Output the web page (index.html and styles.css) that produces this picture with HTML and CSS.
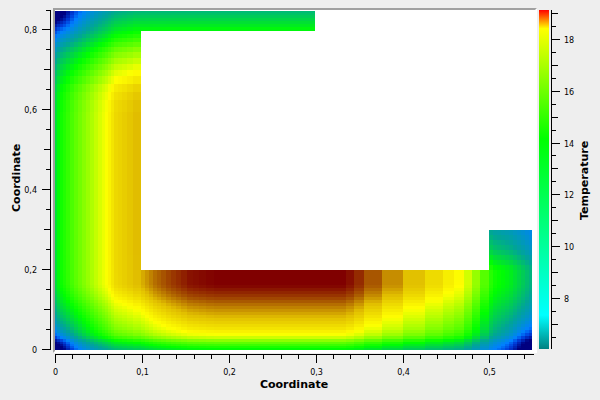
FILE: index.html
```html
<!DOCTYPE html>
<html lang="en">
<head>
  <meta charset="UTF-8">
  <title>Temperature</title>
  <link rel="stylesheet" href="styles.css">
</head>
<body>
  <div class="chart">
    <div class="y-title">Coordinate</div>
    <svg class="y-axis" id="yAxis" width="28" height="346"></svg>
    <div class="plot">
      <canvas id="heat" width="477" height="339"></canvas>
    </div>
    <div class="colorbar"></div>
    <svg class="color-axis" id="colorAxis" width="30" height="346"></svg>
    <div class="color-title">Temperature</div>
    <div class="bottom">
      <svg class="x-axis" id="xAxis" width="484" height="25"></svg>
      <div class="x-title">Coordinate</div>
    </div>
  </div>
  <script src="plot.js"></script>
</body>
</html>
```

FILE: styles.css
```css
body {
  margin: 0;
  width: 600px;
  height: 400px;
  overflow: hidden;
  background-color: #eeeeee;
  font-family: "DejaVu Sans", sans-serif;
  color: #000;
}

.chart {
  display: grid;
  grid-template-columns: 25px 28px 484px 12px 30px 21px;
  grid-template-rows: 345px 47px;
  padding-top: 8px;
}

.y-title,
.color-title {
  writing-mode: vertical-rl;
  transform: rotate(180deg);
  text-align: center;
  font-size: 11px;
  font-weight: bold;
  line-height: 21px;
  letter-spacing: 0;
}

.y-title {
  justify-self: end;
  padding-top: 5px;
  padding-bottom: 5px;
  margin-top: -5px;
  margin-right: -2px;
}

.color-title {
  justify-self: start;
  padding-bottom: 3px;
  margin-top: -3px;
  margin-left: -5px;
}

.plot {
  box-sizing: border-box;
  height: 345px;
  padding-top: 1px;
  background-color: #fff;
  border: 2px solid;
  border-color: #a0a0a0 #fff #fff #a0a0a0;
}

.plot canvas {
  display: block;
}

.colorbar {
  width: 10px;
  height: 339px;
  margin: 2px 0 0 2px;
  background: linear-gradient(to bottom, #ff0000 0%, #ffff00 5.5%, #00ff00 38%, #00ffff 90%, #008080 100%);
}

.bottom {
  grid-column: 3;
  grid-row: 2;
}

.x-axis {
  display: block;
}

.x-title {
  font-size: 11px;
  font-weight: bold;
  line-height: 14px;
  text-align: center;
  margin-top: 0;
  padding-right: 2px;
}

svg {
  overflow: visible;
  shape-rendering: crispEdges;
}

svg text {
  font-size: 8px;
  fill: #000;
  shape-rendering: auto;
}
```

FILE: plot.js
```js
const SVG_NS = "http://www.w3.org/2000/svg";

// Mesh lines of the solution, in page pixels
const meshX = [55,57,60,63,66,70,74,78,82,86,90,94,98,102,105,108,111,114,118,122,127,133,141,145,149,153,157,161,166,171,176,181,187,193,199,206,214,224,236,250,264,278,292,304,315,327,338,346,354,364,382,403,425,443,454,464,472,480,489,493,497,501,505,509,513,517,521,525,529,532];
const meshY = [11,13,15,18,21,24,27,31,34,38,42,47,52,58,64,70,76,84,92,100,112,130,150,170,190,210,230,235,240,245,250,255,260,265,270,273,276,279,282,285,288,291,294,297,300,303,306,309,312,315,318,321,324,327,330,333,336,339,342,344,346,348,350];

const colormap = [
  [0, 0, 0, 128], [0.08, 0, 64, 220], [0.13, 0, 128, 255], [0.25, 0, 165, 150],
  [0.4, 0, 255, 0], [0.68, 255, 255, 0], [0.8, 225, 190, 0], [0.9, 170, 90, 0], [1, 128, 0, 0]
];

// Temperature along the inner wall, through the band and under the top edge
const wallProfile = [[55,.32],[57,.38],[60,.41],[75,.5],[90,.58],[107,.68],[115,.75],[141,.81],[155,.88],[170,.93],[190,.98],[215,1],[345,1],[380,.88],[420,.78],[462,.68],[490,.45],[495,.42],[510,.38],[525,.31],[532,.27]];
const bottomProfile = [[270,1],[285,1],[296,.94],[306,.87],[316,.81],[330,.72],[336,.66],[342,.52],[347,.43],[350,.38]];
const topProfile = [[11,.35],[31,.5],[51,.7],[71,.85],[91,.97],[111,1]];
const stubProfile = [[230,.55],[250,.72],[270,1]];
const corners = [[55,11],[55,350],[532,350]];

function lookup(table, t) {
  if (t <= table[0][0]) return table[0][1];
  for (let i = 1; i < table.length; i++) {
    if (t <= table[i][0]) {
      const a = table[i - 1], b = table[i];
      return a[1] + (b[1] - a[1]) * (t - a[0]) / (b[0] - a[0]);
    }
  }
  return table[table.length - 1][1];
}

function insideDomain(x, y) {
  if (y >= 270 || x < 141) return true;
  if (y < 31 && x < 315) return true;
  return x >= 489 && y >= 230;
}

function field(x, y) {
  let wall = lookup(wallProfile, x);
  if (y < 31 && x >= 141) wall = 0.8;
  let v = wall * lookup(bottomProfile, y) * lookup(topProfile, y);
  if (x >= 489 && y < 270) v = wall * lookup(stubProfile, y);
  corners.forEach(c => {
    v -= 0.28 * Math.exp(-Math.hypot(x - c[0], y - c[1]) / 18);
  });
  return Math.max(0, Math.min(1, v));
}

function colorOf(v) {
  for (let i = 1; i < colormap.length; i++) {
    if (v <= colormap[i][0]) {
      const a = colormap[i - 1], b = colormap[i];
      const t = (v - a[0]) / (b[0] - a[0]);
      const mix = k => Math.round(a[k] + (b[k] - a[k]) * t);
      return `rgb(${mix(1)},${mix(2)},${mix(3)})`;
    }
  }
  return "rgb(128,0,0)";
}

function drawHeat() {
  const ctx = document.getElementById("heat").getContext("2d");
  for (let i = 0; i < meshX.length - 1; i++) {
    for (let j = 0; j < meshY.length - 1; j++) {
      const cx = (meshX[i] + meshX[i + 1]) / 2;
      const cy = (meshY[j] + meshY[j + 1]) / 2;
      if (!insideDomain(cx, cy)) continue;
      ctx.fillStyle = colorOf(field(cx, cy));
      ctx.fillRect(meshX[i] - 55, meshY[j] - 11, meshX[i + 1] - meshX[i], meshY[j + 1] - meshY[j]);
    }
  }
}

function addLine(svg, x1, y1, x2, y2) {
  const line = document.createElementNS(SVG_NS, "line");
  line.setAttribute("x1", x1);
  line.setAttribute("y1", y1);
  line.setAttribute("x2", x2);
  line.setAttribute("y2", y2);
  line.setAttribute("stroke", "#000");
  svg.appendChild(line);
}

function addLabel(svg, x, y, text, anchor) {
  const label = document.createElementNS(SVG_NS, "text");
  label.setAttribute("x", x);
  label.setAttribute("y", y);
  label.setAttribute("text-anchor", anchor);
  label.textContent = text;
  svg.appendChild(label);
}

// Tick positions are page pixels, the svgs sit at known page offsets
function drawYAxis() {
  const svg = document.getElementById("yAxis");
  const left = 25, top = 8;
  addLine(svg, 50.5 - left, 10 - top, 50.5 - left, 350 - top);
  for (let i = 0; i <= 17; i++) {
    const y = Math.floor(349.5 - i * 19.97) + 0.5 - top;
    const major = i % 4 === 0, medium = i % 2 === 0;
    const x2 = major ? 42 : medium ? 44 : 46;
    addLine(svg, 50.5 - left, y, x2 - left, y);
    if (major) {
      addLabel(svg, 37 - left, y + 3, i === 0 ? "0" : "0," + i / 2, "end");
    }
  }
}

function drawXAxis() {
  const svg = document.getElementById("xAxis");
  const left = 53, top = 353;
  addLine(svg, 55 - left, 354.5 - top, 534 - left, 354.5 - top);
  for (let i = 0; i <= 27; i++) {
    const x = Math.floor(55 + i * 17.4) + 0.5 - left;
    const major = i % 5 === 0;
    addLine(svg, x, 354.5 - top, x, (major ? 363 : 359) - top);
    if (major) {
      addLabel(svg, x, 375 - top, i === 0 ? "0" : "0," + i / 5, "middle");
    }
  }
}

function drawColorAxis() {
  const svg = document.getElementById("colorAxis");
  const left = 549, top = 8;
  addLine(svg, 551.5 - left, 10 - top, 551.5 - left, 349 - top);
  for (let t = 6.5; t <= 19; t += 0.5) {
    const y = Math.floor(39.3 + (18 - t) * 25.93) + 0.5 - top;
    const major = t % 2 === 0, medium = t % 1 === 0;
    addLine(svg, 551.5 - left, y, (major ? 560 : medium ? 558 : 556) - left, y);
    if (major) addLabel(svg, 564 - left, y + 3, String(t), "start");
  }
}

window.onload = function() {
  drawHeat();
  drawYAxis();
  drawXAxis();
  drawColorAxis();
};
```
